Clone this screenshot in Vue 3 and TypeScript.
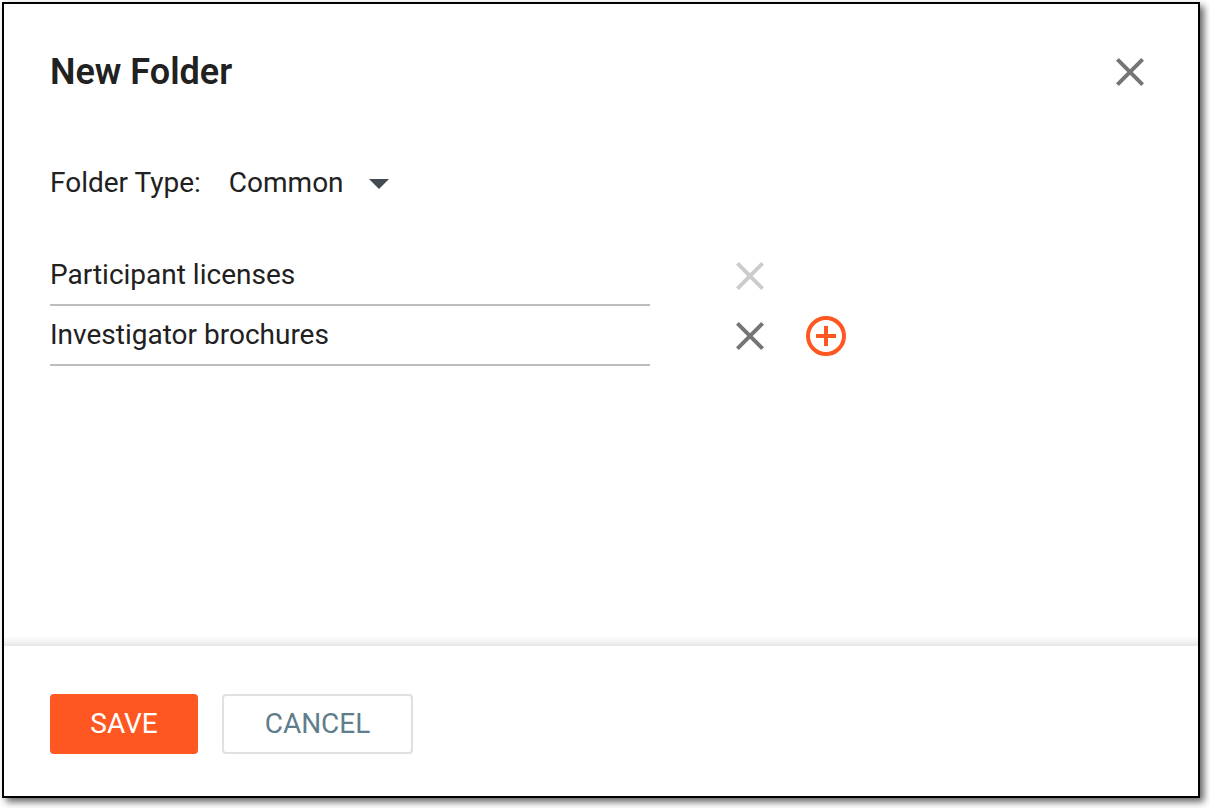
<script setup lang="ts">
import { ref } from 'vue'

interface FolderRow {
  id: number
  name: string
  locked: boolean
}

const folderType = ref('Common')
const folderTypes: string[] = ['Common', 'Private']

const rows = ref<FolderRow[]>([
  { id: 1, name: 'Participant licenses', locked: true },
  { id: 2, name: 'Investigator brochures', locked: false },
])

let nextId = 3

function addRow(): void {
  rows.value.push({ id: nextId++, name: '', locked: false })
}

function removeRow(id: number): void {
  rows.value = rows.value.filter((row) => row.id !== id)
}
</script>

<template>
  <div class="page">
    <form class="dialog" role="dialog" aria-labelledby="dialog-title" @submit.prevent>
      <header class="dialog-header">
        <h1 id="dialog-title" class="title">New Folder</h1>
        <button type="button" class="icon-button" aria-label="Close">
          <svg viewBox="0 0 40 40" class="icon">
            <path d="M7.4 7.4 32.6 32.6M32.6 7.4 7.4 32.6" class="cross" />
          </svg>
        </button>
      </header>

      <main class="dialog-body">
        <div class="type-row">
          <label for="folder-type" class="label">Folder Type:</label>
          <div class="select-box">
            <select id="folder-type" v-model="folderType" class="select">
              <option v-for="type in folderTypes" :key="type" :value="type">{{ type }}</option>
            </select>
            <svg viewBox="0 0 20 10" class="caret" aria-hidden="true">
              <path d="M0 0H20L10 10Z" />
            </svg>
          </div>
        </div>

        <ul class="folders">
          <li v-for="(row, index) in rows" :key="row.id" class="folder">
            <input v-model="row.name" type="text" class="name" :aria-label="`Folder name ${index + 1}`" />
            <div class="actions">
              <button
                type="button"
                class="icon-button"
                :disabled="row.locked"
                aria-label="Remove folder"
                @click="removeRow(row.id)"
              >
                <svg viewBox="0 0 40 40" class="icon">
                  <path d="M7.4 7.4 32.6 32.6M32.6 7.4 7.4 32.6" class="cross" />
                </svg>
              </button>
              <button
                v-if="index === rows.length - 1"
                type="button"
                class="icon-button add"
                aria-label="Add folder"
                @click="addRow"
              >
                <svg viewBox="0 0 40 40" class="icon">
                  <circle cx="20" cy="20" r="18" class="ring" />
                  <path d="M20 10V30M10 20H30" class="plus" />
                </svg>
              </button>
            </div>
          </li>
        </ul>
      </main>

      <footer class="dialog-footer">
        <button type="submit" class="button primary">SAVE</button>
        <button type="button" class="button secondary">CANCEL</button>
      </footer>
    </form>
  </div>
</template>

<style>
body {
  margin: 0;
  background: #fff;
}
</style>

<style scoped>
.page {
  box-sizing: border-box;
  display: flex;
  min-height: 100vh;
  padding: 2px 10px 10px 2px;
  font-family: Roboto, "Liberation Sans", sans-serif;
  font-size: 28px;
  line-height: 40px;
  color: #212121;
}

.dialog {
  flex: 1;
  min-width: 0;
  display: flex;
  flex-direction: column;
  border: 2px solid #000;
  background: #fff;
  box-shadow: 4px 4px 7px rgba(0, 0, 0, 0.6);
}

.dialog-header {
  display: flex;
  align-items: center;
  justify-content: space-between;
  padding: 48px 48px 0 46px;
}

.title {
  margin: 0;
  font-size: 36px;
  font-weight: 600;
  line-height: 40px;
}

.icon-button {
  flex: none;
  width: 40px;
  height: 40px;
  padding: 0;
  border: 0;
  background: none;
  color: #757575;
  cursor: pointer;
}

.icon-button:disabled {
  color: #ccc;
  cursor: default;
}

.icon {
  display: block;
  width: 40px;
  height: 40px;
  fill: none;
  stroke: currentColor;
}

.cross {
  stroke-width: 4;
}

.ring,
.plus {
  stroke-width: 4;
}

.icon-button.add {
  color: #ff5722;
}

.dialog-body {
  flex: 1;
  padding: 71px 46px 40px;
}

.type-row {
  display: flex;
  align-items: center;
  gap: 28px;
}

.select-box {
  position: relative;
}

.select {
  display: block;
  width: 160px;
  height: 40px;
  padding: 0;
  border: 0;
  background: none;
  appearance: none;
  font: inherit;
  color: inherit;
  cursor: pointer;
}

.caret {
  position: absolute;
  top: 16px;
  right: 0;
  width: 20px;
  height: 10px;
  fill: #434a51;
  pointer-events: none;
}

.folders {
  margin: 43px 0 0;
  padding: 0;
  list-style: none;
}

.folder {
  display: flex;
  align-items: center;
  gap: 80px;
  height: 60px;
}

.name {
  box-sizing: border-box;
  flex: 0 1 600px;
  min-width: 0;
  height: 60px;
  padding: 0 0 2px;
  border: 0;
  border-bottom: 2px solid #bdbdbd;
  border-radius: 0;
  background: none;
  font: inherit;
  color: inherit;
  outline: none;
}

.actions {
  display: flex;
  gap: 36px;
}

.dialog-footer {
  position: relative;
  display: flex;
  gap: 24px;
  padding: 48px 46px 42px;
  background: #fff;
}

.dialog-footer::before {
  content: "";
  position: absolute;
  right: 0;
  bottom: 100%;
  left: 0;
  height: 10px;
  background: linear-gradient(to top, rgba(0, 0, 0, 0.1), rgba(0, 0, 0, 0.03) 60%, transparent);
}

.button {
  box-sizing: border-box;
  min-width: 148px;
  height: 60px;
  padding: 0 40px;
  border: 0;
  border-radius: 4px;
  font: inherit;
  cursor: pointer;
}

.primary {
  background: #ff5722;
  color: #fff;
}

.secondary {
  min-width: 191px;
  border: 2px solid #e0e0e0;
  background: #fff;
  color: #607d8b;
}
</style>
